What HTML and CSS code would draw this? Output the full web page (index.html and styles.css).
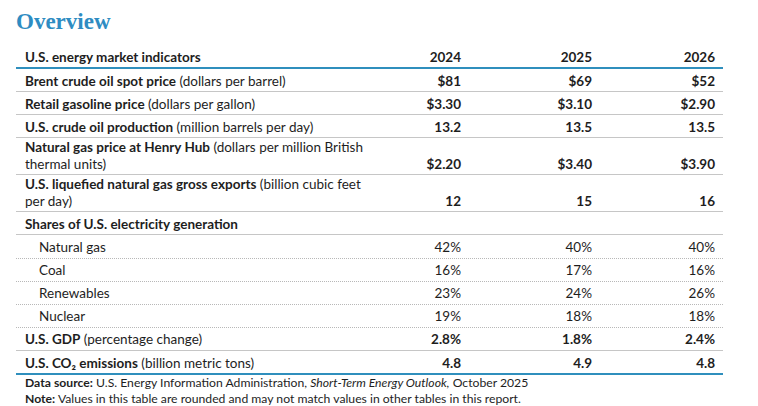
FILE: index.html
```html
<!DOCTYPE html>
<html lang="en">
<head>
<meta charset="utf-8">
<title>Overview</title>
<link rel="stylesheet" href="styles.css">
</head>
<body>
<div class="page">
  <h1 class="title">Overview</h1>
  <div class="tbl">
    <div class="row head">
      <div class="label"><b>U.S. energy market indicators</b></div>
      <div class="val">2024</div><div class="val">2025</div><div class="val">2026</div>
    </div>
    <div class="row">
      <div class="label"><b>Brent crude oil spot price</b> (dollars per barrel)</div>
      <div class="val">$81</div><div class="val">$69</div><div class="val">$52</div>
    </div>
    <div class="row">
      <div class="label"><b>Retail gasoline price</b> (dollars per gallon)</div>
      <div class="val">$3.30</div><div class="val">$3.10</div><div class="val">$2.90</div>
    </div>
    <div class="row">
      <div class="label"><b>U.S. crude oil production</b> (million barrels per day)</div>
      <div class="val">13.2</div><div class="val">13.5</div><div class="val">13.5</div>
    </div>
    <div class="row">
      <div class="label"><b>Natural gas price at Henry Hub</b> (dollars per million British thermal units)</div>
      <div class="val">$2.20</div><div class="val">$3.40</div><div class="val">$3.90</div>
    </div>
    <div class="row">
      <div class="label"><b>U.S. liquefied natural gas gross exports</b> (billion cubic feet per day)</div>
      <div class="val">12</div><div class="val">15</div><div class="val">16</div>
    </div>
    <div class="row">
      <div class="label"><b>Shares of U.S. electricity generation</b></div>
      <div class="val"></div><div class="val"></div><div class="val"></div>
    </div>
    <div class="row sub">
      <div class="label">Natural gas</div>
      <div class="val">42%</div><div class="val">40%</div><div class="val">40%</div>
    </div>
    <div class="row sub">
      <div class="label">Coal</div>
      <div class="val">16%</div><div class="val">17%</div><div class="val">16%</div>
    </div>
    <div class="row sub">
      <div class="label">Renewables</div>
      <div class="val">23%</div><div class="val">24%</div><div class="val">26%</div>
    </div>
    <div class="row sub">
      <div class="label">Nuclear</div>
      <div class="val">19%</div><div class="val">18%</div><div class="val">18%</div>
    </div>
    <div class="row">
      <div class="label"><b>U.S. GDP</b> (percentage change)</div>
      <div class="val">2.8%</div><div class="val">1.8%</div><div class="val">2.4%</div>
    </div>
    <div class="row end">
      <div class="label"><b>U.S. CO₂ emissions</b> (billion metric tons)</div>
      <div class="val">4.8</div><div class="val">4.9</div><div class="val">4.8</div>
    </div>
  </div>
  <div class="notes">
    <p><b>Data source:</b> U.S. Energy Information Administration, <i>Short-Term Energy Outlook,</i> October 2025</p>
    <p><b>Note:</b> Values in this table are rounded and may not match values in other tables in this report.</p>
  </div>
</div>
</body>
</html>
```
FILE: styles.css
```css
html, body {
  margin: 0;
  padding: 0;
  background: #ffffff;
}
.page {
  padding: 8px 0 0 16px;
  font-family: Lato, "Open Sans", sans-serif;
  color: #1e1e1e;
}
.title {
  margin: 0;
  font-family: "Liberation Serif", "Times New Roman", serif;
  font-weight: bold;
  font-size: 23px;
  line-height: 28px;
  color: #2e8cc2;
}
.tbl {
  width: 707px;
  margin-top: 10px;
  font-size: 13.5px;
}
.row {
  display: grid;
  grid-template-columns: 362px 91px 131px 123px;
  align-items: end;
  min-height: 19.1px;
  padding: 1px 0 2px;
  line-height: 16.5px;
  border-bottom: 1px solid #c6c6c6;
}
.row .label {
  padding-left: 9px;
  padding-right: 12px;
}
.row .val {
  text-align: right;
  padding-right: 8px;
  font-weight: bold;
}
.row.head {
  border-bottom: 2.5px solid #2f8fbd;
  padding: 0 0 2px;
}
.row.sub {
  border-bottom: 1px dotted #b8b8b8;
}
.row.sub .label {
  padding-left: 23px;
}
.row.sub .val {
  font-weight: normal;
}
.row.end {
  border-bottom: 2px solid #2f8fbd;
}
.notes {
  width: 707px;
  font-size: 12.2px;
  line-height: 15.5px;
  padding: 0 0 0 9px;
  box-sizing: border-box;
}
.notes p {
  margin: 0;
}
```
